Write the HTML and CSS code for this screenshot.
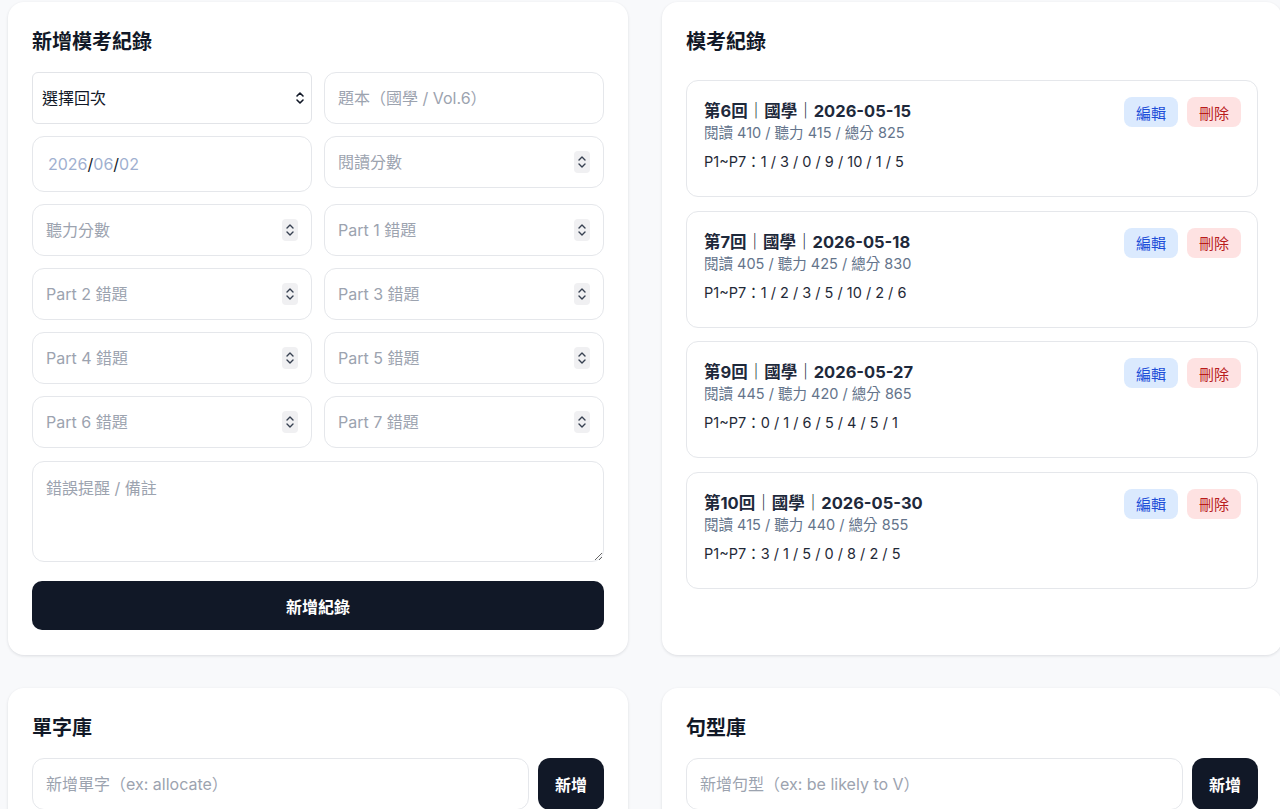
FILE: index.html
```html
<!DOCTYPE html>
<html lang="zh-Hant">
<head>
  <meta charset="UTF-8"/>
  <meta name="viewport" content="width=device-width,initial-scale=1.0"/>
  <title>模考紀錄</title>
  <link rel="stylesheet" href="styles.css">
</head>
<body>
  <div class="grid">

    <!-- NEW RECORD -->
    <section class="card">
      <h2 class="card-title">新增模考紀錄</h2>
      <form class="exam-form">
        <div class="field">
          <select class="input select">
            <option>選擇回次</option>
          </select>
          <svg class="chev" viewBox="0 0 10 16" width="10" height="16"><path d="M2 6 5 3 8 6M2 10 5 13 8 10" fill="none" stroke="#111827" stroke-width="1.6" stroke-linecap="round" stroke-linejoin="round"/></svg>
        </div>
        <input class="input" type="text" placeholder="題本（國學 / Vol.6）">

        <div class="input date"><span class="dim">2026</span>/<span class="dim">06</span>/<span class="dim">02</span></div>
        <div class="field">
          <input class="input" type="number" placeholder="閱讀分數">
          <span class="spin"><svg viewBox="0 0 10 16" width="10" height="16"><path d="M2 6 5 3 8 6M2 10 5 13 8 10" fill="none" stroke="#374151" stroke-width="1.4" stroke-linecap="round" stroke-linejoin="round"/></svg></span>
        </div>

        <div class="field">
          <input class="input" type="number" placeholder="聽力分數">
          <span class="spin"><svg viewBox="0 0 10 16" width="10" height="16"><path d="M2 6 5 3 8 6M2 10 5 13 8 10" fill="none" stroke="#374151" stroke-width="1.4" stroke-linecap="round" stroke-linejoin="round"/></svg></span>
        </div>
        <div class="field">
          <input class="input" type="number" placeholder="Part 1 錯題">
          <span class="spin"><svg viewBox="0 0 10 16" width="10" height="16"><path d="M2 6 5 3 8 6M2 10 5 13 8 10" fill="none" stroke="#374151" stroke-width="1.4" stroke-linecap="round" stroke-linejoin="round"/></svg></span>
        </div>

        <div class="field">
          <input class="input" type="number" placeholder="Part 2 錯題">
          <span class="spin"><svg viewBox="0 0 10 16" width="10" height="16"><path d="M2 6 5 3 8 6M2 10 5 13 8 10" fill="none" stroke="#374151" stroke-width="1.4" stroke-linecap="round" stroke-linejoin="round"/></svg></span>
        </div>
        <div class="field">
          <input class="input" type="number" placeholder="Part 3 錯題">
          <span class="spin"><svg viewBox="0 0 10 16" width="10" height="16"><path d="M2 6 5 3 8 6M2 10 5 13 8 10" fill="none" stroke="#374151" stroke-width="1.4" stroke-linecap="round" stroke-linejoin="round"/></svg></span>
        </div>

        <div class="field">
          <input class="input" type="number" placeholder="Part 4 錯題">
          <span class="spin"><svg viewBox="0 0 10 16" width="10" height="16"><path d="M2 6 5 3 8 6M2 10 5 13 8 10" fill="none" stroke="#374151" stroke-width="1.4" stroke-linecap="round" stroke-linejoin="round"/></svg></span>
        </div>
        <div class="field">
          <input class="input" type="number" placeholder="Part 5 錯題">
          <span class="spin"><svg viewBox="0 0 10 16" width="10" height="16"><path d="M2 6 5 3 8 6M2 10 5 13 8 10" fill="none" stroke="#374151" stroke-width="1.4" stroke-linecap="round" stroke-linejoin="round"/></svg></span>
        </div>

        <div class="field">
          <input class="input" type="number" placeholder="Part 6 錯題">
          <span class="spin"><svg viewBox="0 0 10 16" width="10" height="16"><path d="M2 6 5 3 8 6M2 10 5 13 8 10" fill="none" stroke="#374151" stroke-width="1.4" stroke-linecap="round" stroke-linejoin="round"/></svg></span>
        </div>
        <div class="field">
          <input class="input" type="number" placeholder="Part 7 錯題">
          <span class="spin"><svg viewBox="0 0 10 16" width="10" height="16"><path d="M2 6 5 3 8 6M2 10 5 13 8 10" fill="none" stroke="#374151" stroke-width="1.4" stroke-linecap="round" stroke-linejoin="round"/></svg></span>
        </div>

        <textarea class="input note" placeholder="錯誤提醒 / 備註"></textarea>
        <button type="button" class="btn-primary">新增紀錄</button>
      </form>
    </section>

    <!-- RECORD LIST -->
    <section class="card">
      <h2 class="card-title">模考紀錄</h2>
      <div class="records">
        <div class="record">
          <div class="record-info">
            <div class="record-title">第6回｜國學｜2026-05-15</div>
            <div class="record-scores">閱讀 410 / 聽力 415 / 總分 825</div>
            <div class="record-parts">P1~P7：1 / 3 / 0 / 9 / 10 / 1 / 5</div>
          </div>
          <div class="record-actions">
            <button type="button" class="btn-edit">編輯</button>
            <button type="button" class="btn-del">刪除</button>
          </div>
        </div>
        <div class="record">
          <div class="record-info">
            <div class="record-title">第7回｜國學｜2026-05-18</div>
            <div class="record-scores">閱讀 405 / 聽力 425 / 總分 830</div>
            <div class="record-parts">P1~P7：1 / 2 / 3 / 5 / 10 / 2 / 6</div>
          </div>
          <div class="record-actions">
            <button type="button" class="btn-edit">編輯</button>
            <button type="button" class="btn-del">刪除</button>
          </div>
        </div>
        <div class="record">
          <div class="record-info">
            <div class="record-title">第9回｜國學｜2026-05-27</div>
            <div class="record-scores">閱讀 445 / 聽力 420 / 總分 865</div>
            <div class="record-parts">P1~P7：0 / 1 / 6 / 5 / 4 / 5 / 1</div>
          </div>
          <div class="record-actions">
            <button type="button" class="btn-edit">編輯</button>
            <button type="button" class="btn-del">刪除</button>
          </div>
        </div>
        <div class="record">
          <div class="record-info">
            <div class="record-title">第10回｜國學｜2026-05-30</div>
            <div class="record-scores">閱讀 415 / 聽力 440 / 總分 855</div>
            <div class="record-parts">P1~P7：3 / 1 / 5 / 0 / 8 / 2 / 5</div>
          </div>
          <div class="record-actions">
            <button type="button" class="btn-edit">編輯</button>
            <button type="button" class="btn-del">刪除</button>
          </div>
        </div>
      </div>
    </section>

    <!-- WORDS -->
    <section class="card">
      <h2 class="card-title">單字庫</h2>
      <div class="add-row">
        <input class="input" type="text" placeholder="新增單字（ex: allocate）">
        <button type="button" class="btn-add">新增</button>
      </div>
    </section>

    <!-- PATTERNS -->
    <section class="card">
      <h2 class="card-title">句型庫</h2>
      <div class="add-row">
        <input class="input" type="text" placeholder="新增句型（ex: be likely to V）">
        <button type="button" class="btn-add">新增</button>
      </div>
    </section>

  </div>
</body>
</html>
```

FILE: styles.css
```css
/* RESET */
* {
  margin: 0;
  padding: 0;
  box-sizing: border-box;
}

html, body {
  height: 100%;
  font-family: 'Inter', 'Noto Sans CJK TC', sans-serif;
  background: #f8f9fb;
  color: #111827;
  overflow: hidden;
}

/* LAYOUT */
.grid {
  display: grid;
  grid-template-columns: 620px 620px;
  column-gap: 34px;
  row-gap: 33px;
  padding: 2px 0 0 8px;
}

.card {
  background: #fff;
  border-radius: 16px;
  box-shadow: 0 1px 3px rgba(15, 23, 42, 0.12);
  padding: 24px 24px 25px;
}

.card-title {
  font-size: 20px;
  font-weight: 700;
  line-height: 30px;
  margin-top: 1px;
  color: #111827;
  margin-bottom: 15px;
}

/* INPUTS */
.input {
  width: 100%;
  height: 52px;
  padding: 0 13px;
  font-family: inherit;
  font-size: 16px;
  color: #111827;
  background: #fff;
  border: 1px solid #e5e7eb;
  border-radius: 12px;
  outline: none;
}

.input::placeholder {
  color: #9ca3af;
}

input[type="number"]::-webkit-inner-spin-button,
input[type="number"]::-webkit-outer-spin-button {
  -webkit-appearance: none;
  margin: 0;
}

.field {
  position: relative;
}

.select {
  appearance: none;
  -webkit-appearance: none;
  padding-left: 9px;
  border-radius: 6px;
  border-color: #e2e4e8;
}

.chev {
  position: absolute;
  right: 7px;
  top: 18px;
  pointer-events: none;
}

.spin {
  position: absolute;
  right: 14px;
  top: 15px;
  width: 16px;
  height: 22px;
  border-radius: 4px;
  background: #f0f0f2;
  display: flex;
  align-items: center;
  justify-content: center;
  pointer-events: none;
}

.date {
  height: 56px;
  display: flex;
  align-items: center;
  padding-left: 15px;
  color: #111827;
}

.date .dim {
  color: #9fb0d0;
}

/* FORM */
.exam-form {
  display: grid;
  grid-template-columns: 1fr 1fr;
  gap: 12px;
}

.note {
  grid-column: span 2;
  height: 101px;
  padding: 13px;
  margin-top: 1px;
  resize: vertical;
}

.btn-primary {
  grid-column: span 2;
  height: 49px;
  margin-top: 7px;
  border: none;
  border-radius: 10px;
  background: #111827;
  color: #fff;
  font-family: inherit;
  font-size: 16px;
  font-weight: 700;
  cursor: pointer;
}

/* RECORDS */
.records {
  display: flex;
  flex-direction: column;
  gap: 13.5px;
  padding-top: 8px;
}

.record {
  display: flex;
  justify-content: space-between;
  align-items: flex-start;
  border: 1px solid #e5e7eb;
  border-radius: 12px;
  padding: 16px 16px 24px 17px;
}

.record-title {
  font-size: 16.5px;
  font-weight: 700;
  line-height: 24px;
  margin-top: 2px;
  color: #1e293b;
}

.record-scores {
  font-size: 14.5px;
  line-height: 20px;
  color: #64748b;
}

.record-parts {
  font-size: 14.5px;
  line-height: 20px;
  margin-top: 9px;
  color: #1f2937;
}

.record-actions {
  display: flex;
  gap: 9px;
}

.btn-edit, .btn-del {
  width: 54px;
  height: 30px;
  border: none;
  border-radius: 8px;
  font-family: inherit;
  font-size: 15px;
  cursor: pointer;
}

.btn-edit {
  background: #dbeafe;
  color: #1d4ed8;
}

.btn-del {
  background: #fee2e2;
  color: #b91c1c;
}

/* ADD ROW */
.add-row {
  display: flex;
  gap: 9px;
}

.btn-add {
  flex: 0 0 66px;
  height: 52px;
  border: none;
  border-radius: 12px;
  background: #111827;
  color: #fff;
  font-family: inherit;
  font-size: 16px;
  font-weight: 600;
  cursor: pointer;
}
```
